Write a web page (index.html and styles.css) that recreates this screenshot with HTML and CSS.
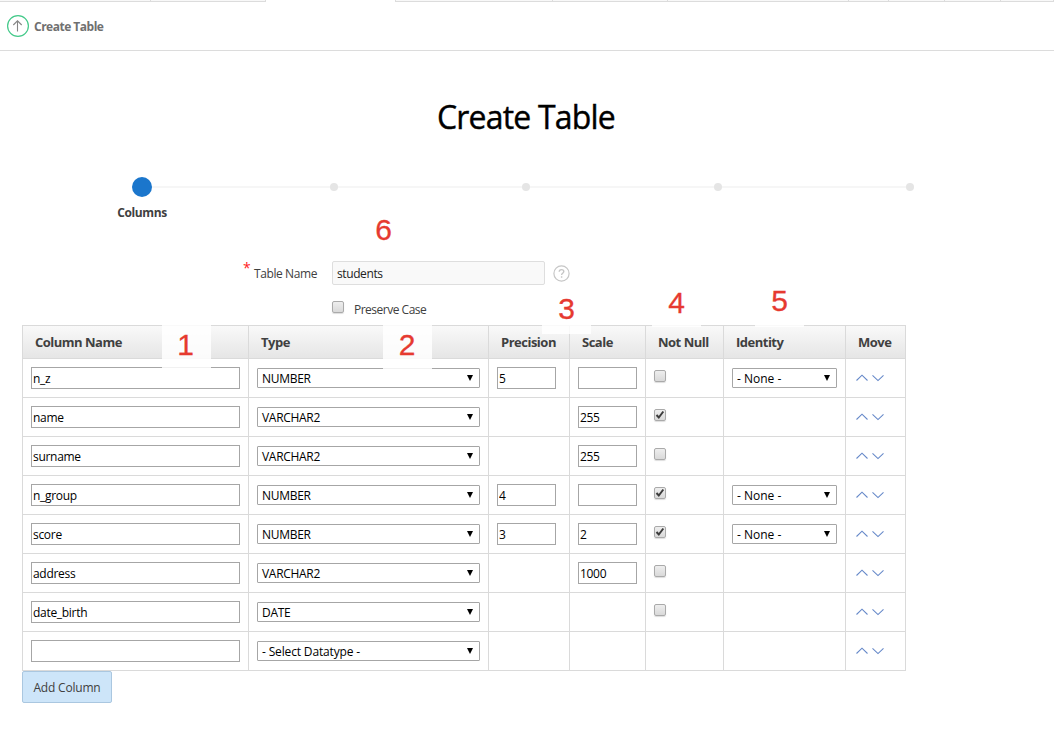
FILE: index.html
```
<!DOCTYPE html>
<html lang="en">
<head>
<meta charset="utf-8">
<title>Create Table</title>
<link rel="stylesheet" href="styles.css">
</head>
<body>
<div class="tabs"><i class="t1"></i><i class="t2"></i><i class="active"></i><i class="t3"></i><i class="t4"></i><i class="t5"></i><i class="t6"></i><i class="t7"></i><i class="t8"></i><i class="t9"></i></div>
<header class="crumb">
  <svg width="22" height="22" viewBox="0 0 22 22" fill="none"><circle cx="11" cy="11" r="10.4" stroke="#43c989" stroke-width="1.2"/><path d="M10.5 16.5V6M6.3 10l4.2-4.2 4.2 4.2" stroke="#858585" stroke-width="1.1"/></svg>
  <span class="crumb-text">Create Table</span>
</header>
<main>
  <h1><span>Create Table</span></h1>
  <div class="wizard">
    <b class="step current"></b><i></i><b class="step"></b><i class="seg"></i><b class="step"></b><i class="seg"></i><b class="step"></b><i class="seg"></i><b class="step"></b>
  </div>
  <div class="step-label"><span>Columns</span></div>
  <div class="field">
    <span class="star">*</span><label class="label">Table Name</label>
    <input class="name" value="students">
    <svg class="help" width="17" height="17" viewBox="0 0 17 17" fill="none" stroke="#c6c6c6"><circle cx="8.5" cy="8.5" r="7.6" stroke-width="1.2"/><path d="M6.2 6.8C6.2 5.3 7.2 4.6 8.5 4.6s2.3.8 2.3 2c0 1.6-2.2 1.7-2.2 3.3M8.6 11.2v1.5" stroke-width="1.4"/></svg>
  </div>
  <div class="preserve"><span class="check"></span><span class="ptext">Preserve Case</span></div>
  <div class="grid">
    <div class="row head"><div><span>Column Name</span></div><div><span>Type</span></div><div><span>Precision</span></div><div><span>Scale</span></div><div><span>Not Null</span></div><div><span>Identity</span></div><div><span>Move</span></div></div>
    <div class="row"><div><input class="txt" value="n_z"></div><div><div class="select caps"><span>NUMBER</span></div></div><div><input class="num" value="5"></div><div><input class="num"></div><div><span class="check"></span></div><div><div class="select"><span class="none">- None -</span></div></div><div class="move"><svg width="28" height="8" viewBox="0 0 28 8"><path d="M.5 6.5 6 1.2l5.500 5.300M16.500 1.300 22 6.600l5.500-5.300"/></svg></div></div>
    <div class="row"><div><input class="txt" value="name"></div><div><div class="select caps"><span>VARCHAR2</span></div></div><div></div><div><input class="num" value="255"></div><div><span class="check"><svg width="12" height="12" viewBox="0 0 12 12"><path d="M2.500 6l2.300 2.500 4.500-6"/></svg></span></div><div></div><div class="move"><svg width="28" height="8" viewBox="0 0 28 8"><path d="M.5 6.5 6 1.2l5.500 5.300M16.500 1.300 22 6.600l5.500-5.300"/></svg></div></div>
    <div class="row"><div><input class="txt" value="surname"></div><div><div class="select caps"><span>VARCHAR2</span></div></div><div></div><div><input class="num" value="255"></div><div><span class="check"></span></div><div></div><div class="move"><svg width="28" height="8" viewBox="0 0 28 8"><path d="M.5 6.5 6 1.2l5.500 5.300M16.500 1.300 22 6.600l5.500-5.300"/></svg></div></div>
    <div class="row"><div><input class="txt" value="n_group"></div><div><div class="select caps"><span>NUMBER</span></div></div><div><input class="num" value="4"></div><div><input class="num"></div><div><span class="check"><svg width="12" height="12" viewBox="0 0 12 12"><path d="M2.500 6l2.300 2.500 4.500-6"/></svg></span></div><div><div class="select"><span class="none">- None -</span></div></div><div class="move"><svg width="28" height="8" viewBox="0 0 28 8"><path d="M.5 6.5 6 1.2l5.500 5.300M16.500 1.300 22 6.600l5.500-5.300"/></svg></div></div>
    <div class="row"><div><input class="txt" value="score"></div><div><div class="select caps"><span>NUMBER</span></div></div><div><input class="num" value="3"></div><div><input class="num" value="2"></div><div><span class="check"><svg width="12" height="12" viewBox="0 0 12 12"><path d="M2.500 6l2.300 2.500 4.500-6"/></svg></span></div><div><div class="select"><span class="none">- None -</span></div></div><div class="move"><svg width="28" height="8" viewBox="0 0 28 8"><path d="M.5 6.5 6 1.2l5.500 5.300M16.500 1.300 22 6.600l5.500-5.300"/></svg></div></div>
    <div class="row"><div><input class="txt" value="address"></div><div><div class="select caps"><span>VARCHAR2</span></div></div><div></div><div><input class="num" value="1000"></div><div><span class="check"></span></div><div></div><div class="move"><svg width="28" height="8" viewBox="0 0 28 8"><path d="M.5 6.5 6 1.2l5.500 5.300M16.500 1.300 22 6.600l5.500-5.300"/></svg></div></div>
    <div class="row"><div><input class="txt" value="date_birth"></div><div><div class="select caps"><span>DATE</span></div></div><div></div><div></div><div><span class="check"></span></div><div></div><div class="move"><svg width="28" height="8" viewBox="0 0 28 8"><path d="M.5 6.5 6 1.2l5.500 5.300M16.500 1.300 22 6.600l5.500-5.300"/></svg></div></div>
    <div class="row"><div><input class="txt"></div><div><div class="select"><span>- Select Datatype -</span></div></div><div></div><div></div><div></div><div></div><div class="move"><svg width="28" height="8" viewBox="0 0 28 8"><path d="M.5 6.5 6 1.2l5.500 5.300M16.500 1.300 22 6.600l5.500-5.300"/></svg></div></div>
  </div>
  <button class="add"><span>Add Column</span></button>
</main>
<div class="note n1">1</div>
<div class="note n2">2</div>
<div class="note n3">3</div>
<div class="note n4">4</div>
<div class="note n5">5</div>
<div class="note n6">6</div>
</body>
</html>
```
FILE: styles.css
```
* { box-sizing: border-box; }
body { margin: 0; height: 748px; overflow: hidden; position: relative; background: #fff; color: #404040; font: 12px/16px "Open Sans", "Noto Sans", sans-serif; letter-spacing: -0.3px; }
input { font: inherit; letter-spacing: inherit; color: #000; outline: none; }

.tabs { display: grid; grid-template-columns: 151px 115px 130px 157px 115px 181px 40px 56px 56px 53px; height: 2px; }
.tabs i { background: #f8f8f8; border-bottom: 1px solid #dcdcdc; border-right: 1px solid #dcdcdc; }
.tabs .active { background: #fff; border-bottom: 0; }
.crumb { height: 49px; border-bottom: 1px solid #dcdcdc; display: flex; align-items: center; padding: 0 0 0 7px; gap: 5px; }
.crumb-text { font-weight: 700; color: #707070; letter-spacing: -0.5px; padding-top: 2px; }

h1 { margin: 0; padding: 42px 2px 0 0; text-align: center; font-size: 32px; line-height: 48px; font-weight: 500; letter-spacing: -0.8px; color: #000; -webkit-text-stroke: 0.4px #000; }
.wizard { display: flex; align-items: center; margin: 36px 0 0 132px; height: 20px; }
.step { width: 8px; height: 8px; border-radius: 50%; background: #e5e5e5; flex: none; }
.step.current { width: 20px; height: 20px; background: #1b76cc; }
.wizard i { width: 178px; height: 2px; background: #f6f6f6; }
.wizard .seg { width: 184px; }
.step-label { width: 120px; margin: 8px 0 0 82px; text-align: center; font-weight: 700; letter-spacing: -0.4px; line-height: 16px; }

.field { display: flex; align-items: center; margin-top: 39px; height: 26px; padding-left: 243px; }
.star { width: 11px; color: #f22; font-size: 14px; padding-bottom: 11px; }
.label { width: 78px; letter-spacing: -0.4px; padding-top: 2px; }
.name { width: 213px; height: 24px; border: 1px solid #dedede; border-radius: 2px; background: #f9f9f9; padding: 1px 4px 0; color: #222; letter-spacing: -0.4px; }
.help { margin-left: 8px; }
.preserve { display: flex; margin-top: 15px; height: 24px; padding-left: 332px; gap: 10px; letter-spacing: -0.5px; }
.ptext { padding-top: 1px; }
.check { display: block; flex: none; width: 12px; height: 12px; border: 1px solid #aaa; border-radius: 2px; background: linear-gradient(#eee, #d9d9d9); box-shadow: 0 1px 1px #ddd; }
.check svg { display: block; margin: -1px; fill: none; stroke: #3c3c3c; stroke-width: 2; }

.grid { width: 884px; margin-left: 22px; border: 1px solid #dadada; border-width: 1px 1px 0 0; }
.row { display: grid; grid-template-columns: 226px 240px 81px 76px 78px 122px 60px; height: 39px; }
.row > div { border-left: 1px solid #dadada; border-bottom: 1px solid #dadada; padding: 8px 0 0 8px; }
.row.head { height: 33px; background: linear-gradient(#f9f9f9, #e5e5e5); font-size: 13px; font-weight: 700; letter-spacing: -0.5px; color: #404040; }
.row.head > div { padding: 8px 0 0 12px; }
.txt, .num { display: block; height: 22px; border: 1px solid #a6a6a6; padding: 1px 1px 0; }
.txt { width: 209px; }
.num { width: 59px; }
.row .check { margin-top: 3px; margin-left: 0; }
.select { display: flex; justify-content: space-between; align-items: center; width: 223px; height: 20px; margin-top: 1px; border: 1px solid #a6a6a6; border-radius: 1px; padding: 2px 6px 0 4px; color: #000; letter-spacing: -0.15px; }
.caps { letter-spacing: -0.3px; }
.select::after { content: ""; border: solid transparent; border-width: 6px 3px 0; border-top-color: #000; margin-top: -3px; }
.row > div:nth-child(6) .select { width: 105px; letter-spacing: 0; }
.move svg { display: block; margin: 7px 0 0 2px; fill: none; stroke: #6689c9; stroke-width: 1.1; }
.add { display: block; margin-left: 22px; width: 90px; height: 32px; border: 1px solid #aac7e0; border-radius: 2px; background: #cde5f9; color: #404040; font: inherit; letter-spacing: -0.2px; padding: 2px 0 0; }

.note { position: absolute; width: 49px; font: 30px/34px "Liberation Sans", Arial, sans-serif; letter-spacing: 0; text-align: center; color: #e63a30; background: rgba(255, 255, 255, .84); -webkit-text-stroke: 0.3px #e63a30; }
.n1 { left: 162px; top: 325px; height: 43px; padding: 3px 2px 0 0; }
.n2 { left: 383px; top: 325px; height: 44px; padding: 3px 1px 0 0; }
.n3 { left: 542px; top: 291px; height: 43px; padding-top: 1px; }
.n4 { left: 652px; top: 286px; height: 41px; }
.n5 { left: 755px; top: 284px; height: 43px; }
.n6 { left: 359px; top: 213px; height: 36px; }
```
